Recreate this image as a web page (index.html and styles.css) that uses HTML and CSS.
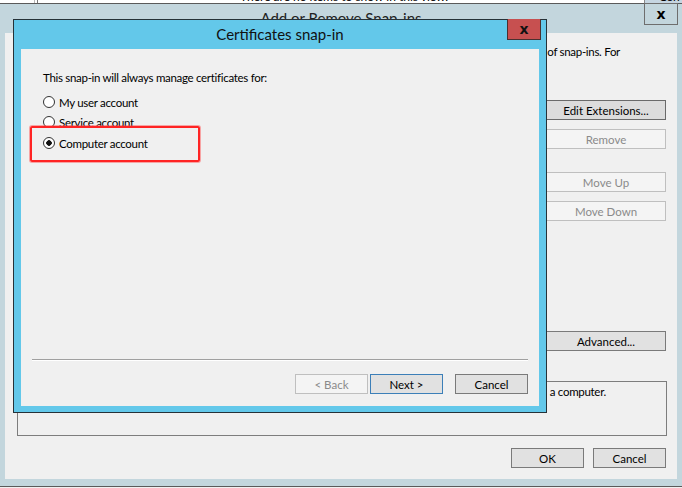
FILE: index.html
```html
<!DOCTYPE html>
<html lang="en">
<head>
    <meta charset="UTF-8">
    <meta name="viewport" content="width=device-width, initial-scale=1.0">
    <title>Certificates snap-in</title>
    <link rel="stylesheet" href="styles.css">
</head>

<body>
<div class="screen">

    <div class="console-view">
        <span class="console-tree"></span>
        <span class="console-empty">There are no items to show in this view.</span>
        <span class="console-btn">Con</span>
    </div>

    <div class="snapins-window">
        <div class="snapins-title">Add or Remove Snap-ins</div>
        <button class="snapins-close">x</button>

        <div class="snapins-client">
            <div class="snapins-intro">
                <span>of snap-ins. For</span>
            </div>

            <div class="snapins-main">
                <div class="snapins-side">
                    <button class="btn btn-focus">Edit Extensions...</button>
                    <button class="btn" disabled>Remove</button>
                    <button class="btn move-up" disabled>Move Up</button>
                    <button class="btn" disabled>Move Down</button>
                    <button class="btn advanced">Advanced...</button>
                </div>
            </div>

            <div class="snapins-desc">
                <span>a computer.</span>
            </div>

            <div class="snapins-footer">
                <button class="btn btn-small">OK</button>
                <button class="btn btn-small">Cancel</button>
            </div>
        </div>
    </div>

    <!-- the wizard page that sits on top -->
    <div class="cert-dialog">
        <div class="cert-title">Certificates snap-in</div>
        <button class="cert-close">x</button>

        <div class="cert-body">
            <p class="cert-intro">This snap-in will always manage certificates for:</p>

            <div class="cert-options">
                <label class="option"><span class="radio"></span>My user account</label>
                <label class="option"><span class="radio"></span>Service account</label>
                <label class="option option-last"><span class="radio checked"></span>Computer account</label>
            </div>

            <div class="cert-spacer"></div>
            <div class="cert-separator"></div>

            <div class="cert-buttons">
                <button class="btn btn-small" disabled>&lt; Back</button>
                <button class="btn btn-small btn-default">Next &gt;</button>
                <button class="btn btn-small cancel">Cancel</button>
            </div>

            <div class="highlight"></div>
        </div>
    </div>

</div>
</body>
</html>
```

FILE: styles.css
```css
* {
    margin: 0;
    padding: 0;
    box-sizing: border-box;
}

body {
    font-family: Lato, "Liberation Sans", sans-serif;
    font-size: 11.5px;
    letter-spacing: -0.3px;
    color: #000;
    background: #f0f0f0;
}

.screen {
    position: relative;
    width: 682px;
    height: 488px;
    overflow: hidden;
    display: flex;
    flex-direction: column;
}

/* MMC console behind everything */
.console-view {
    flex: none;
    height: 3px;
    display: flex;
    background: #fff;
    overflow: hidden;
}

.console-tree {
    margin-left: 34px;
    width: 4px;
    border-left: 1px solid #b8b8b8;
    border-right: 1px solid #777;
}

.console-empty {
    margin-left: 202px;
    margin-top: -10px;
    line-height: 13px;
    font-size: 12px;
    letter-spacing: 0;
    white-space: nowrap;
}

.console-btn {
    margin-left: auto;
    width: 38px;
    height: 13px;
    margin-top: -10px;
    padding-left: 14px;
    line-height: 13px;
    font-size: 12px;
    border-left: 1px solid #8a8a8a;
    background: #c6d6e2;
}

/* Add or Remove Snap-ins */
.snapins-window {
    flex: none;
    position: relative;
    height: 484px;
    display: flex;
    flex-direction: column;
    background: #c3d6dd;
    border-top: 1px solid #5a5a5a;
    border-bottom: 1px solid #5a5a5a;
}

.snapins-title {
    height: 29px;
    line-height: 29px;
    text-align: center;
    font-size: 15px;
    letter-spacing: 0;
    color: #222;
}

.snapins-close {
    position: absolute;
    top: -1px;
    right: 4px;
    width: 34px;
    height: 22px;
    border: 1px solid #6e6e6e;
    background: #c3d6dd;
    font: bold 14px "DejaVu Sans", sans-serif;
    color: #000;
}

.snapins-client {
    margin-left: 5px;
    width: 672px;
    height: 446px;
    padding: 12px 11px 0 12px;
    display: flex;
    flex-direction: column;
    background: #f0f0f0;
}

.snapins-intro {
    height: 14px;
    line-height: 14px;
    display: flex;
    justify-content: flex-end;
    padding-right: 46px;
    white-space: nowrap;
}

.snapins-main {
    display: flex;
    justify-content: flex-end;
}

.snapins-side {
    width: 120px;
    margin-top: 41px;
    display: flex;
    flex-direction: column;
    gap: 9px;
}

.snapins-side .move-up {
    margin-top: 14px;
}

.snapins-side .advanced {
    margin-top: 101px;
}

.snapins-desc {
    height: 55px;
    margin-top: 30px;
    margin-right: -1px;
    padding: 3px 60px 0 0;
    display: flex;
    justify-content: flex-end;
    line-height: 14px;
    white-space: nowrap;
    border: 1px solid #7d7d7d;
}

.snapins-footer {
    margin-top: 12px;
    display: flex;
    justify-content: flex-end;
    gap: 9px;
}

/* buttons */
.btn {
    width: 120px;
    height: 20px;
    font: inherit;
    letter-spacing: 0;
    color: #000;
    background: #e1e1e1;
    border: 1px solid #7a7a7a;
}

.btn:disabled {
    color: #8a8a8a;
    background: #f4f4f4;
    border-color: #bfbfbf;
}

.btn-focus {
    background: #dcdcdc;
    border-color: #6a6a6a;
}

.btn-small {
    width: 73px;
}

.btn-default {
    border-color: #3c7fb8;
}

/* Certificates snap-in */
.cert-dialog {
    position: absolute;
    left: 13px;
    top: 19px;
    width: 534px;
    height: 394px;
    padding: 0 7px 6px;
    display: flex;
    flex-direction: column;
    background: #63c8ea;
    border: 1px solid #263238;
}

.cert-title {
    height: 29px;
    line-height: 29px;
    text-align: center;
    font-size: 15px;
    letter-spacing: 0;
    color: #111;
}

.cert-close {
    position: absolute;
    top: -1px;
    right: 5px;
    width: 34px;
    height: 21px;
    border: 1px solid #4a3030;
    border-top: none;
    background: #c75050;
    font: bold 14px "DejaVu Sans", sans-serif;
    color: #111;
}

.cert-body {
    flex: 1;
    position: relative;
    display: flex;
    flex-direction: column;
    padding: 22px 11px 12px;
    background: #f0f0f0;
}

.cert-intro {
    margin-left: 11px;
    line-height: 14px;
}

.cert-options {
    margin: 7px 0 0 11px;
    display: flex;
    flex-direction: column;
}

.option {
    height: 20px;
    display: flex;
    align-items: center;
}

.option-last {
    margin-top: 1px;
}

.radio {
    width: 12px;
    height: 12px;
    margin-right: 4px;
    border: 1px solid #333;
    border-radius: 50%;
    background: #fff;
}

.radio.checked {
    background: radial-gradient(circle, #111 0 2.5px, #fff 3px);
}

.cert-spacer {
    flex: 1;
}

.cert-separator {
    height: 2px;
    border-top: 1px solid #a0a0a0;
    border-bottom: 1px solid #fff;
}

.cert-buttons {
    margin-top: 13px;
    display: flex;
    justify-content: flex-end;
    gap: 2px;
}

.cert-buttons .cancel {
    margin-left: 10px;
}

/* red annotation round the chosen option */
.highlight {
    position: absolute;
    left: 9px;
    top: 77px;
    width: 170px;
    height: 36px;
    border: 2px solid #ff2424;
    border-radius: 2px;
    box-shadow: 0 0 0 1px rgba(255, 70, 70, 0.45);
}
```
